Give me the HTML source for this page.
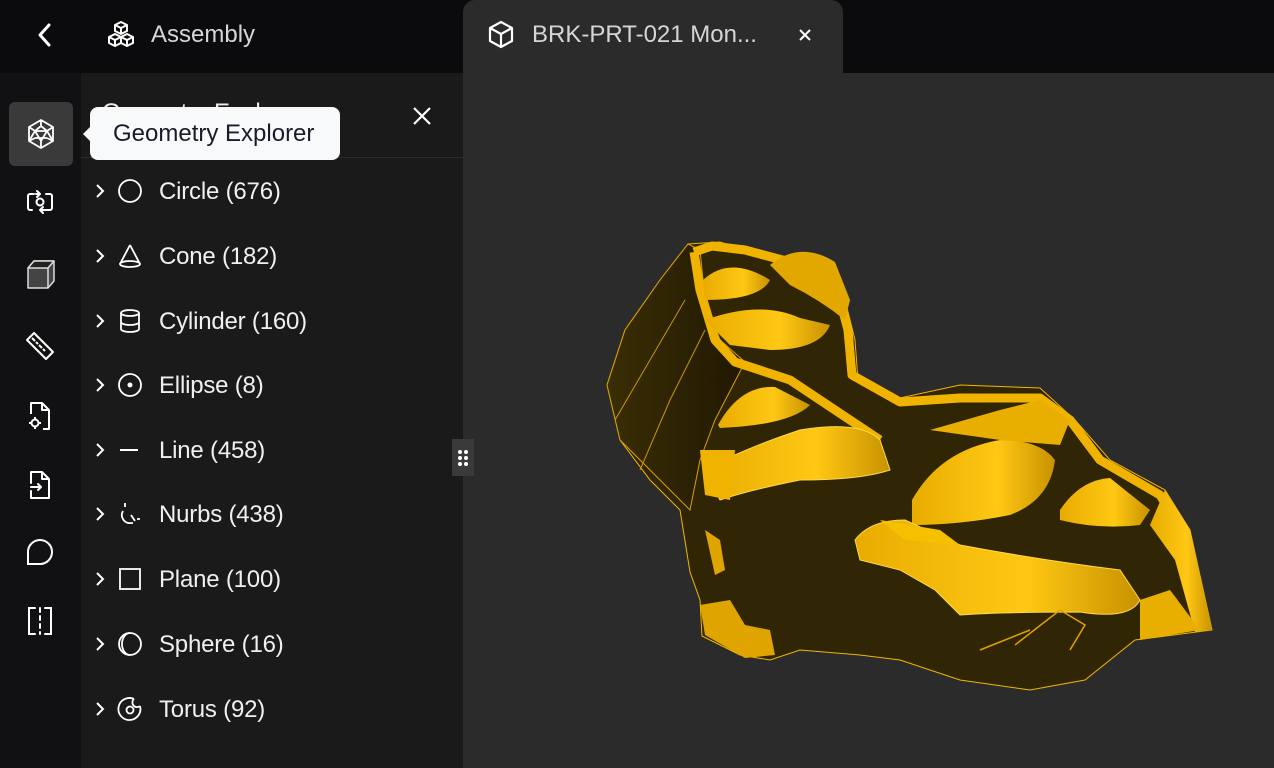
<!DOCTYPE html>
<html><head><meta charset="utf-8"><style>
*{margin:0;padding:0;box-sizing:border-box}
body{width:1274px;height:768px;overflow:hidden;background:#2b2b2b;font-family:"Liberation Sans",sans-serif;position:relative;color:#e8e8e8}
.top{position:absolute;left:0;top:0;width:1274px;height:73px;background:#0b0b0d}
.rail{position:absolute;left:0;top:73px;width:81px;height:695px;background:#111113}
.panel{position:absolute;left:81px;top:73px;width:382px;height:695px;background:#1a1a1a}
.tab{position:absolute;left:463px;top:0;width:380px;height:76px;background:#2b2b2b;border-radius:12px 12px 0 0}
.t{position:absolute;font-size:24px;white-space:nowrap;line-height:1}
svg{position:absolute;overflow:visible}
.row{position:absolute;left:0;height:40px;width:382px}
.row .lbl{position:absolute;left:78px;top:7px;font-size:24px;color:#f0f0f0;letter-spacing:-0.2px}
.row svg.ch{left:12px;top:11px}
.row svg.ic{left:36px;top:7px}
</style></head><body>
<div class="top"></div>
<div class="rail"></div>
<div class="panel">
 <div class="t" style="left:21px;top:28px;color:#eee">Geometry Explorer</div>
 <div style="position:absolute;left:0;top:84px;width:382px;height:1px;background:#2c2c2c"></div>
 <svg style="left:330px;top:32px" width="22" height="22" viewBox="0 0 22 22"><path d="M3 3L19 19M19 3L3 19" stroke="#fff" stroke-width="2.2"/></svg>
</div>
<div class="tab"></div>

<svg style="left:36px;top:22px" width="18" height="26" viewBox="0 0 18 26"><path d="M13 3L4 13L13 23" fill="none" stroke="#fff" stroke-width="3" stroke-linecap="round" stroke-linejoin="round"/></svg>
<svg style="left:106px;top:20px" width="30" height="30" viewBox="0 0 30 30" fill="none" stroke="#fff" stroke-width="2" stroke-linejoin="round">
<path d="M15 2l6 3v6l-6 3-6-3V5z M9 5l6 3 6-3 M15 8v6"/>
<path d="M9 14l6 3v6l-6 3-6-3v-6z M3 17l6 3 6-3 M9 20v6"/>
<path d="M21 14l6 3v6l-6 3-6-3v-6z M15 17l6 3 6-3 M21 20v6"/></svg>
<div class="t" style="left:151px;top:23px;color:#d6d6d6">Assembly</div>
<svg style="left:487px;top:20px" width="28" height="30" viewBox="0 0 28 30" fill="none" stroke="#fff" stroke-width="2.2" stroke-linejoin="round"><path d="M14 2l11 6v13l-11 6-11-6V8z M3 8l11 6 11-6 M14 14v13"/></svg>
<div class="t" style="left:532px;top:23px;color:#d6d6d6">BRK-PRT-021 Mon...</div>
<svg style="left:798px;top:28px" width="14" height="14" viewBox="0 0 14 14"><path d="M2 2L12 12M12 2L2 12" stroke="#fff" stroke-width="2"/></svg>

<div style="position:absolute;left:9px;top:102px;width:64px;height:64px;background:#3a3a3a;border-radius:6px"></div>
<svg style="left:25px;top:118px" width="32" height="32" viewBox="0 0 32 32" fill="none" stroke="#fff" stroke-width="1.8" stroke-linejoin="round"><path d="M16 2l12 7v14l-12 7-12-7V9z M16 2v6 M4 9l6 4 M28 9l-6 4 M16 30v-7 M4 23l6-3 M28 23l-6-3 M16 8l6 5-6 10-6-10z M10 13h12 M10 13l-6 10 M22 13l6 10 M10 20h12"/></svg>
<svg style="left:26px;top:190px" width="28" height="26" viewBox="0 0 28 26" fill="none" stroke="#fff" stroke-width="2" stroke-linecap="round" stroke-linejoin="round"><path d="M8 4H4a2 2 0 0 0-2 2v12a2 2 0 0 0 2 2h2 M20 4h4a2 2 0 0 1 2 2v12a2 2 0 0 1-2 2h-8 M11 1l3 3-3 3 M17 17l-3 3 3 3 M14 4H10"/><circle cx="14" cy="12" r="3.5"/></svg>
<svg style="left:26px;top:258px" width="30" height="32" viewBox="0 0 30 32"><path d="M2 10l6-7h20v20l-6 7H2z" fill="#444" stroke="#ddd" stroke-width="1.5" stroke-linejoin="round"/><path d="M2 10l6-7h20l-6 7z" fill="#222" stroke="#ddd" stroke-width="1.5" stroke-linejoin="round"/><path d="M22 10v20" stroke="#ddd" stroke-width="1.5"/></svg>
<svg style="left:24px;top:330px" width="32" height="32" viewBox="0 0 32 32" fill="none" stroke="#fff" stroke-width="2" stroke-linejoin="round"><path d="M3 10l7-7 19 19-7 7z M8 8l3 3 M12 12l2 2 M15 15l3 3 M19 19l2 2"/></svg>
<svg style="left:27px;top:400px" width="26" height="32" viewBox="0 0 26 32" fill="none" stroke="#fff" stroke-width="2" stroke-linejoin="round"><path d="M4 14V3h11l7 7v19h-6 M15 3v7h7"/><circle cx="8" cy="23" r="3.5"/><path d="M8 17v2 M8 27v2 M2 23h2 M12 23h2"/></svg>
<svg style="left:27px;top:469px" width="26" height="32" viewBox="0 0 26 32" fill="none" stroke="#fff" stroke-width="2" stroke-linejoin="round" stroke-linecap="round"><path d="M4 14V3h11l7 7v19H4v-7 M15 3v7h7 M4 18h10 M11 15l3 3-3 3"/></svg>
<svg style="left:26px;top:538px" width="28" height="28" viewBox="0 0 28 28" fill="none" stroke="#fff" stroke-width="2"><path d="M2 26V14A12 12 0 1 1 14 26z"/></svg>
<svg style="left:27px;top:606px" width="26" height="30" viewBox="0 0 26 30" fill="none" stroke="#fff" stroke-width="2" stroke-linecap="round"><path d="M8 2H2v26h6 M18 2h6v26h-6 M13 2v4 M13 10v4 M13 18v4 M13 26v2"/></svg>

<div class="panel" style="background:none">
 <div class="row" style="top:98px"><svg class="ch" width="14" height="18"><path d="M4 3l6 6-6 6" fill="none" stroke="#fff" stroke-width="2"/></svg><svg class="ic" width="26" height="26"><circle cx="13" cy="13" r="11" fill="none" stroke="#fff" stroke-width="1.8"/></svg><div class="lbl">Circle (676)</div></div>
 <div class="row" style="top:163px"><svg class="ch" width="14" height="18"><path d="M4 3l6 6-6 6" fill="none" stroke="#fff" stroke-width="2"/></svg><svg class="ic" width="26" height="26" fill="none" stroke="#fff" stroke-width="1.8"><path d="M13 2L3 21M13 2l10 19"/><ellipse cx="13" cy="21" rx="10" ry="3"/></svg><div class="lbl">Cone (182)</div></div>
 <div class="row" style="top:228px"><svg class="ch" width="14" height="18"><path d="M4 3l6 6-6 6" fill="none" stroke="#fff" stroke-width="2"/></svg><svg class="ic" width="26" height="26" fill="none" stroke="#fff" stroke-width="1.8"><ellipse cx="13" cy="5" rx="9" ry="3"/><path d="M4 5v16a9 3 0 0 0 18 0V5 M4 14a9 3 0 0 0 18 0"/></svg><div class="lbl">Cylinder (160)</div></div>
 <div class="row" style="top:292px"><svg class="ch" width="14" height="18"><path d="M4 3l6 6-6 6" fill="none" stroke="#fff" stroke-width="2"/></svg><svg class="ic" width="26" height="26"><circle cx="13" cy="13" r="11" fill="none" stroke="#fff" stroke-width="1.8"/><circle cx="13" cy="13" r="2.5" fill="#fff"/></svg><div class="lbl">Ellipse (8)</div></div>
 <div class="row" style="top:357px"><svg class="ch" width="14" height="18"><path d="M4 3l6 6-6 6" fill="none" stroke="#fff" stroke-width="2"/></svg><svg class="ic" width="26" height="26"><path d="M3 13h18" stroke="#fff" stroke-width="2"/></svg><div class="lbl">Line (458)</div></div>
 <div class="row" style="top:421px"><svg class="ch" width="14" height="18"><path d="M4 3l6 6-6 6" fill="none" stroke="#fff" stroke-width="2"/></svg><svg class="ic" width="26" height="26" fill="none" stroke="#fff" stroke-width="1.8"><path d="M8 2v4 M6 10a8 8 0 0 0 8 12h2 M14 14l4 6 M20 18h3"/></svg><div class="lbl">Nurbs (438)</div></div>
 <div class="row" style="top:486px"><svg class="ch" width="14" height="18"><path d="M4 3l6 6-6 6" fill="none" stroke="#fff" stroke-width="2"/></svg><svg class="ic" width="26" height="26"><rect x="3" y="3" width="20" height="20" fill="none" stroke="#fff" stroke-width="1.8"/></svg><div class="lbl">Plane (100)</div></div>
 <div class="row" style="top:551px"><svg class="ch" width="14" height="18"><path d="M4 3l6 6-6 6" fill="none" stroke="#fff" stroke-width="2"/></svg><svg class="ic" width="26" height="26" fill="none" stroke="#fff" stroke-width="1.8"><circle cx="13" cy="13" r="11"/><path d="M13 2a8 11 0 0 0 0 22"/></svg><div class="lbl">Sphere (16)</div></div>
 <div class="row" style="top:616px"><svg class="ch" width="14" height="18"><path d="M4 3l6 6-6 6" fill="none" stroke="#fff" stroke-width="2"/></svg><svg class="ic" width="26" height="26" fill="none" stroke="#fff" stroke-width="1.8"><path d="M17 3A11 11 0 1 0 23 10"/><path d="M17 3a4 4 0 0 0 6 7"/><circle cx="13" cy="14" r="3.5"/></svg><div class="lbl">Torus (92)</div></div>
</div>

<div style="position:absolute;left:452px;top:439px;width:22px;height:37px;background:#3a3a3a"></div>
<svg style="left:452px;top:439px" width="22" height="37"><g fill="#fff"><circle cx="8" cy="13" r="2"/><circle cx="14" cy="13" r="2"/><circle cx="8" cy="19" r="2"/><circle cx="14" cy="19" r="2"/><circle cx="8" cy="25" r="2"/><circle cx="14" cy="25" r="2"/></g></svg>

<div style="position:absolute;left:90px;top:107px;width:250px;height:53px;background:#f8f9fb;border-radius:8px"></div>
<svg style="left:82px;top:125px" width="10" height="18"><path d="M10 0L1 9l9 9z" fill="#f8f9fb"/></svg>
<div class="t" style="left:113px;top:122px;color:#1a1a2a">Geometry Explorer</div>

<svg style="left:0;top:0" width="1274" height="768" viewBox="0 0 1274 768">
<defs>
<linearGradient id="lf" x1="0" x2="1"><stop offset="0" stop-color="#3a2e05"/><stop offset="1" stop-color="#201802"/></linearGradient>
<linearGradient id="yl" x1="0" x2="1"><stop offset="0" stop-color="#e8ac00"/><stop offset=".6" stop-color="#ffc814"/><stop offset="1" stop-color="#c89200"/></linearGradient>
</defs>
<path d="M688 244L720 242L760 255L790 258L830 262L845 300L855 340L858 380L900 398L960 385L1040 388L1075 420L1110 460L1165 490L1190 530L1212 630L1135 640L1085 680L1030 690L960 680L900 660L860 655L800 650L770 660L740 655L702 636L700 600L690 572L680 510L650 480L620 440L607 385L625 330L660 280Z" fill="#302505" stroke="#f0b800" stroke-width="1"/>
<path d="M607 385L625 330L660 280L688 244L700 250L705 300L720 340L745 362L715 420L700 460L690 510L660 480L620 440Z" fill="url(#lf)" stroke="#d9a200" stroke-width="1"/>
<path d="M615 420L650 360L685 300 M640 470L670 400L705 330" stroke="#c8960a" stroke-width="1" fill="none"/>
<path d="M694 252L712 246L745 250L790 262L832 272L840 300L848 330L852 375L900 402L960 398L1040 398L1070 420L1100 460L1160 495L1185 535" fill="none" stroke="#f0b400" stroke-width="9" stroke-linejoin="round"/>
<path d="M694 252L700 290L715 340L735 362L790 380L850 420L880 440" fill="none" stroke="#f0b400" stroke-width="9" stroke-linejoin="round"/>
<path d="M703 280Q730 255 770 280Q760 300 705 300Z" fill="url(#yl)"/>
<path d="M705 320Q760 300 800 318L830 325Q820 350 770 350L730 345Z" fill="url(#yl)"/>
<path d="M718 425Q740 385 775 387L810 405Q790 425 720 428Z" fill="url(#yl)"/>
<path d="M770 265Q800 240 835 262L850 300L845 320Q820 300 790 285Z" fill="#e3a800"/>
<path d="M705 470Q740 450 800 430Q860 420 880 440L890 470Q860 480 800 480Q750 490 720 500Z" fill="url(#yl)" stroke="#ffd84a" stroke-width="1"/>
<path d="M700 450L735 450L730 500L705 495Z" fill="#f0b400"/>
<path d="M912 500Q940 450 1000 440Q1040 440 1055 460Q1050 500 1010 515Q960 525 912 525Z" fill="url(#yl)"/>
<path d="M1060 510Q1080 480 1110 478L1150 510L1140 525Q1100 530 1060 520Z" fill="url(#yl)"/>
<path d="M930 430L1000 410L1040 400L1070 420L1060 445L1000 440Z" fill="#e8ae00"/>
<path d="M1165 490L1190 530L1212 630L1195 632L1175 560L1150 525Z" fill="url(#yl)"/>
<path d="M1140 600L1170 590L1200 630L1140 640Z" fill="#e8ae00"/>
<path d="M855 540Q870 520 905 520L960 545Q1040 560 1120 570L1140 600Q1130 620 1080 612Q1000 612 960 615L935 590L900 570L860 560Z" fill="url(#yl)" stroke="#ffd84a" stroke-width="1"/>
<path d="M880 520L940 530L960 545L905 540Z" fill="#f5c000"/>
<path d="M700 605L730 600L745 625L770 630L775 655L745 658L705 635Z" fill="#e0a400"/>
<path d="M980 650L1030 630 M1015 645L1060 610L1085 625L1070 650" stroke="#e0a400" stroke-width="1.5" fill="none"/>
<path d="M705 530L720 540L725 570L715 575Z" fill="#e0a400"/>
</svg>
</body></html>
